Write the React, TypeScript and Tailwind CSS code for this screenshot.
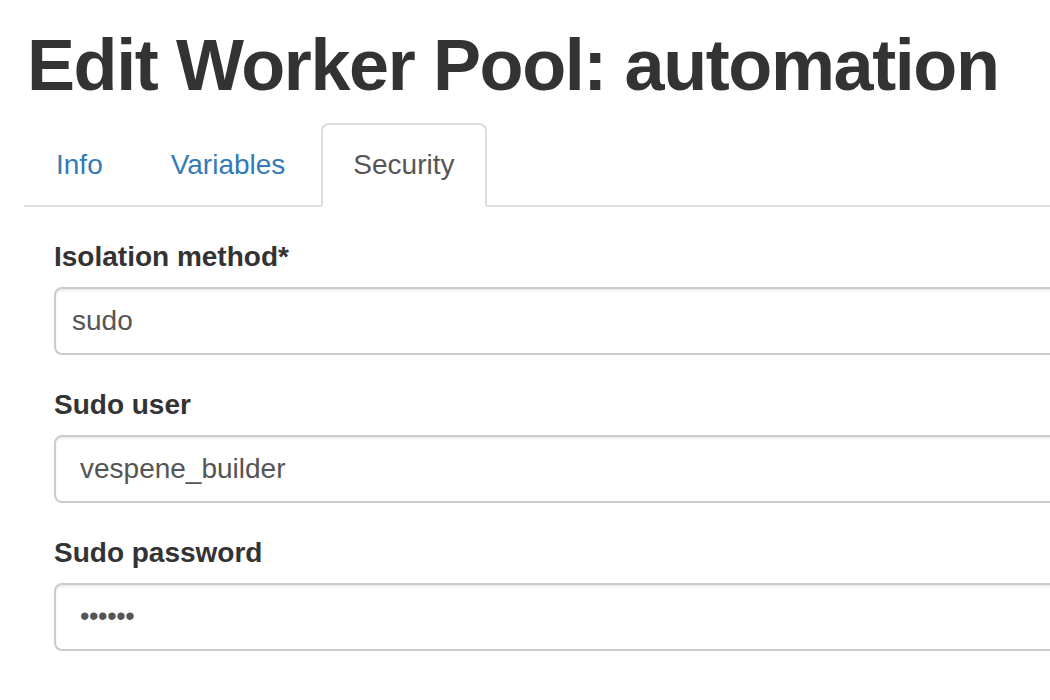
import React from 'react';

const fields = [
  { label: 'Isolation method*', value: 'sudo', pad: 'pl-[16px]' },
  { label: 'Sudo user', value: 'vespene_builder', pad: 'pl-[24px]' },
  { label: 'Sudo password', value: '••••••', pad: 'pl-[24px]', secret: true },
];

const App: React.FC = () => {
  const tabs = ['Info', 'Variables', 'Security'];

  return (
    <div className="w-full h-[700px] overflow-hidden bg-white font-['Liberation_Sans',Arial,sans-serif]">
      <div className="w-[1140px] pl-[24px]">
        <h1 className="pt-[26px] mb-[18px] pl-[3px] text-[72px] leading-[79px] font-bold text-[#333] tracking-[-1.4px]">
          Edit Worker Pool: automation
        </h1>

        <ul className="flex border-b-2 border-[#ddd]">
          {tabs.map((tab) => {
            const active = tab === 'Security';
            return (
              <li key={tab} className="mr-[4px] -mb-[2px]">
                <span
                  className={
                    active
                      ? 'block px-[30px] py-[20px] text-[28px] leading-[40px] text-[#555] bg-white border-2 border-[#ddd] border-b-transparent rounded-t-[8px]'
                      : 'block px-[30px] py-[20px] text-[28px] leading-[40px] text-[#337ab7] border-2 border-transparent rounded-t-[8px]'
                  }
                >
                  {tab}
                </span>
              </li>
            );
          })}
        </ul>

        <form className="pt-[30px] px-[30px]">
          {fields.map((f) => (
            <div key={f.label} className="mb-[30px]">
              <label className="block mb-[10px] text-[28px] leading-[40px] font-bold text-[#333]">
                {f.label}
              </label>
              <div
                className={`h-[68px] flex items-center border-2 border-[#ccc] rounded-[8px] shadow-[inset_0_2px_2px_rgba(0,0,0,0.075)] text-[#555] ${f.pad} ${
                  f.secret ? 'text-[27px] tracking-[-0.4px] pb-[2px]' : 'text-[28px]'
                }`}
              >
                {f.value}
              </div>
            </div>
          ))}
        </form>
      </div>
    </div>
  );
};

export default App;
